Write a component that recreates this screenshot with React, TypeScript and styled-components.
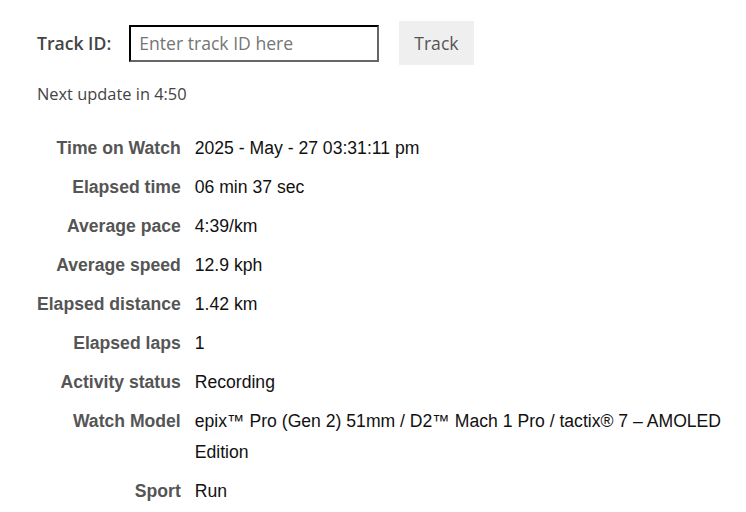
import React from "react";
import styled, { createGlobalStyle } from "styled-components";

const GlobalStyle = createGlobalStyle`
  html, body {
    margin: 0;
    padding: 0;
    background: #ffffff;
  }
`;

const Page = styled.div`
  padding: 21px 8px 0 37px;
  font-family: "Open Sans", "Liberation Sans", sans-serif;
  color: #444;
`;

const TrackForm = styled.form`
  display: flex;
  align-items: center;
`;

const TrackLabel = styled.label`
  font-size: 17.6px;
  font-weight: 600;
  color: #444;
  margin-right: 18px;
`;

const TrackInput = styled.input`
  box-sizing: border-box;
  width: 250px;
  height: 37px;
  padding: 0 8px;
  font-family: "Open Sans", "Liberation Sans", sans-serif;
  font-size: 17.6px;
  border: 2px inset #767676;
  border-top-color: #222;
  border-left-color: #222;
  border-right-color: #666;
  border-bottom-color: #666;
  outline: none;

  &::placeholder {
    color: #757575;
  }
`;

const TrackButton = styled.button`
  margin-left: 20px;
  height: 44px;
  padding: 0 15px;
  border: none;
  background: #efefef;
  color: #555;
  font-family: "Open Sans", "Liberation Sans", sans-serif;
  font-size: 17.6px;
  cursor: pointer;
`;

const Countdown = styled.p`
  margin: 17px 0 0;
  font-size: 16.4px;
  color: #444;
`;

const InfoTable = styled.table`
  margin: 24px 0 0 -7px;
  border-collapse: collapse;
  font-family: "Liberation Sans", Arial, sans-serif;
  font-size: 17.6px;
  line-height: 31px;
`;

const Key = styled.th`
  padding: 4px 7px;
  text-align: right;
  vertical-align: top;
  white-space: nowrap;
  font-weight: 700;
  color: #555;
`;

const Value = styled.td`
  padding: 4px 7px;
  text-align: left;
  vertical-align: top;
  color: #111;
`;

const rows: [string, string][] = [
  ["Time on Watch", "2025 - May - 27 03:31:11 pm"],
  ["Elapsed time", "06 min 37 sec"],
  ["Average pace", "4:39/km"],
  ["Average speed", "12.9 kph"],
  ["Elapsed distance", "1.42 km"],
  ["Elapsed laps", "1"],
  ["Activity status", "Recording"],
  [
    "Watch Model",
    "epix™ Pro (Gen 2) 51mm / D2™ Mach 1 Pro / tactix® 7 – AMOLED Edition",
  ],
  ["Sport", "Run"],
];

const App = () => {
  return (
    <>
      <GlobalStyle />
      <Page>
        <TrackForm onSubmit={(e) => e.preventDefault()}>
          <TrackLabel htmlFor="track-id">Track ID:</TrackLabel>
          <TrackInput id="track-id" placeholder="Enter track ID here" />
          <TrackButton type="submit">Track</TrackButton>
        </TrackForm>
        <Countdown>Next update in 4:50</Countdown>
        <InfoTable>
          <tbody>
            {rows.map(([key, value]) => (
              <tr key={key}>
                <Key>{key}</Key>
                <Value>{value}</Value>
              </tr>
            ))}
          </tbody>
        </InfoTable>
      </Page>
    </>
  );
};

export default App;
